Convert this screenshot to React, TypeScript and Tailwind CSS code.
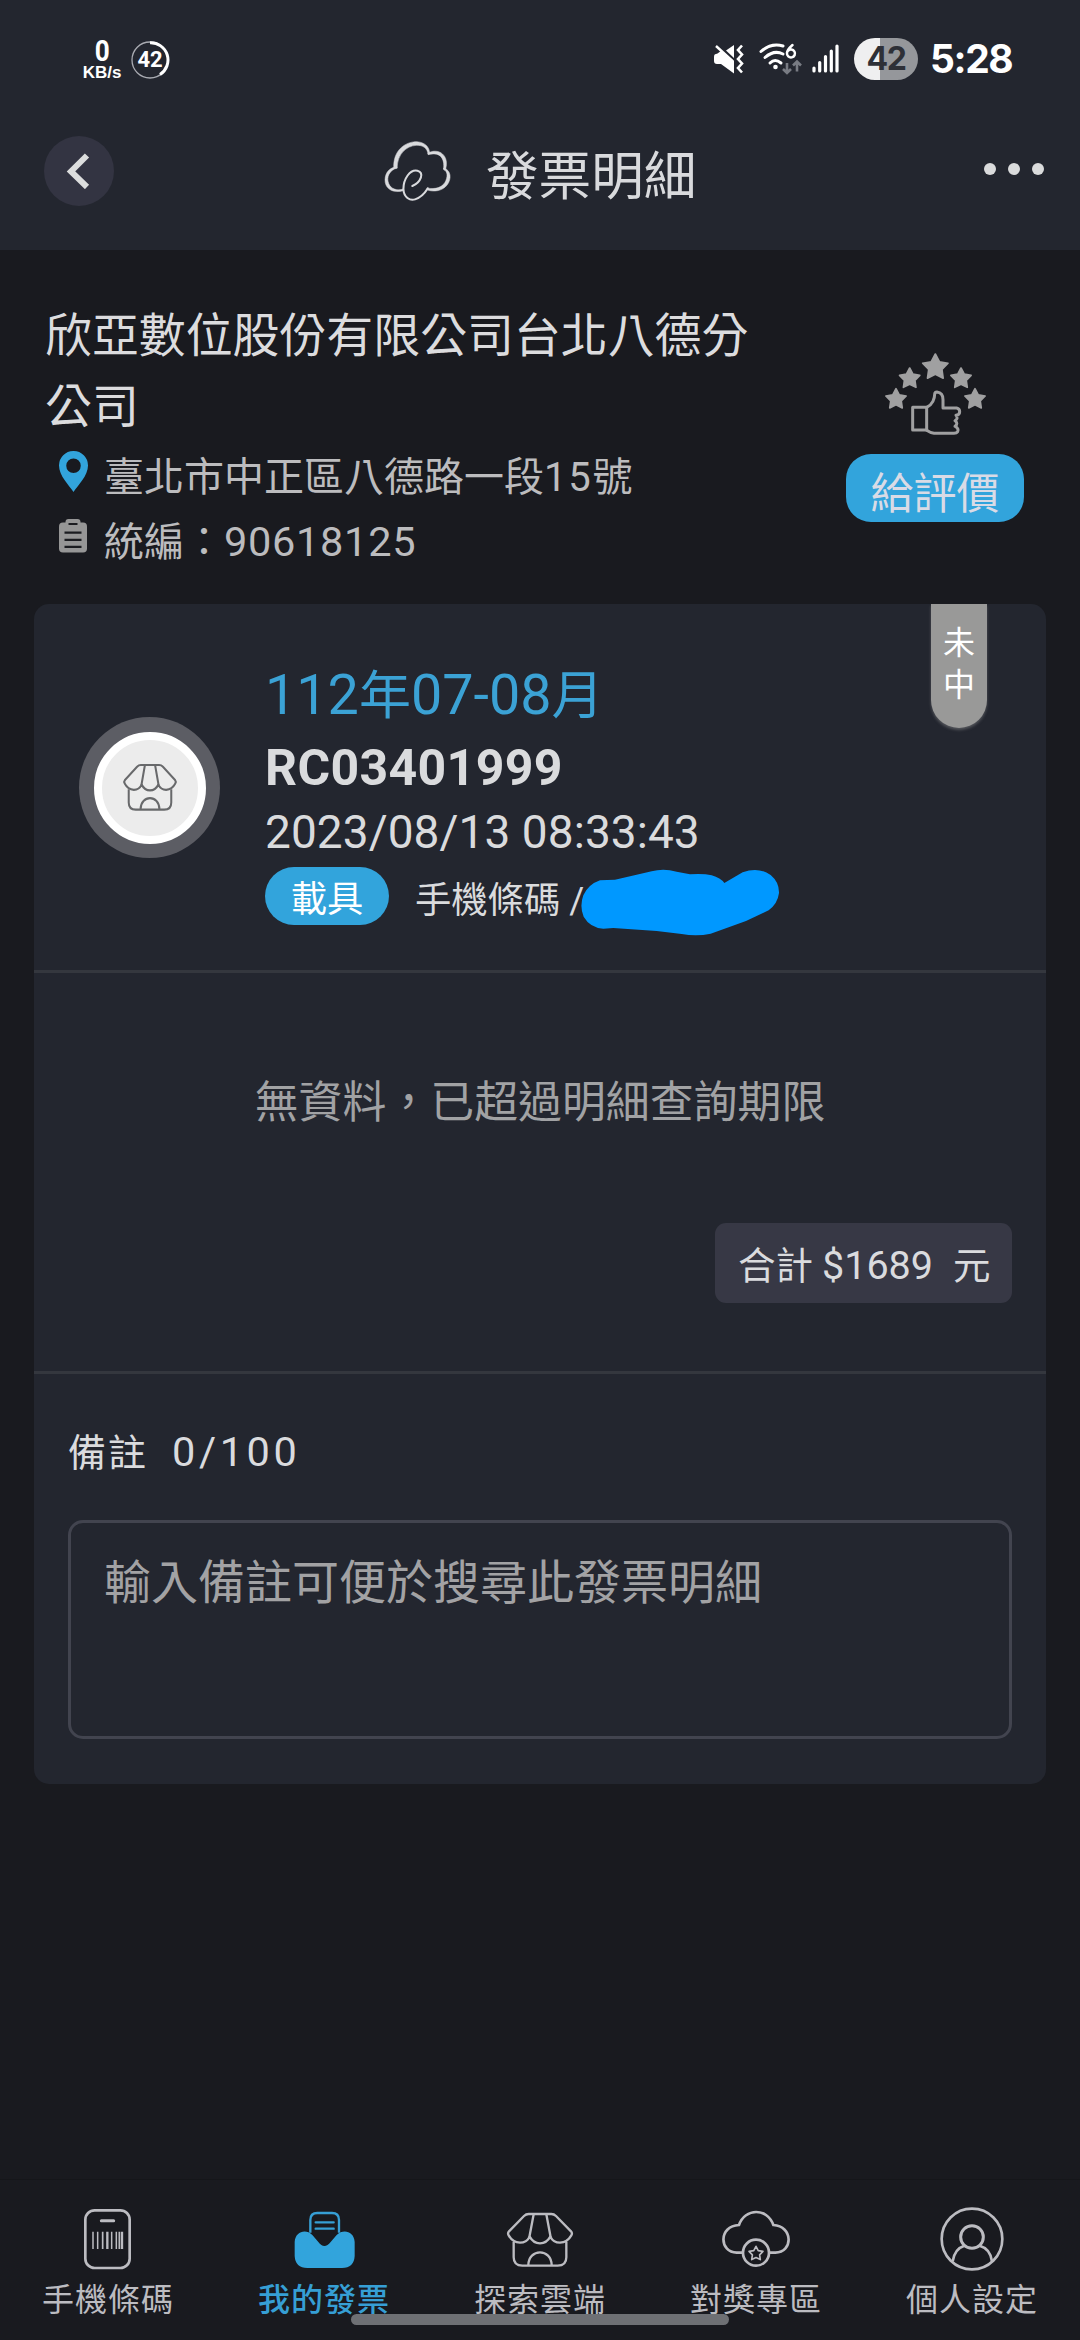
import type { ReactNode } from "react";

const STORE_PATHS = (
  <>
    <path d="M326 162 H394 Q402 162 408 168 L453 214 Q458 220 454 226 Q442 247 420 248 Q400 248 391 230 Q380 250 360 250 Q340 250 329 230 Q320 248 300 248 Q278 247 266 226 Q262 220 267 214 L312 168 Q318 162 326 162 Z" />
    <path d="M341 163 L328 232 M379 163 L392 232" />
    <path d="M281 246 V292 Q281 317 307 317 H413 Q439 317 439 292 V246" />
    <path d="M325 316 C325 264 395 264 395 316" />
  </>
);

function StarShape({ x, y, r }: { x: number; y: number; r: number }) {
  const points = Array.from({ length: 10 }, (_, i) => {
    const radius = i % 2 === 0 ? r : r * 0.52;
    const a = (Math.PI / 5) * i - Math.PI / 2;
    return `${(x + radius * Math.cos(a)).toFixed(1)},${(y + radius * Math.sin(a)).toFixed(1)}`;
  }).join(" ");
  return <polygon points={points} strokeLinejoin="round" />;
}

function StatusBar() {
  return (
    <div className="flex h-[118px] items-start justify-between pl-[82px] pr-[69px] text-white">
      <div className="flex pt-[38px]">
        <div className="flex w-10 flex-col items-center">
          <span className="h-[27px] scale-x-90 text-[29px] font-bold leading-[27px]">0</span>
          <span className="mt-[1px] h-[14px] font-['Liberation_Sans'] text-[17px] font-bold leading-[14px]">KB/s</span>
        </div>
        <div className="ml-[8px] mt-[1px] grid place-items-center">
          <svg className="col-start-1 row-start-1 h-10 w-10" viewBox="0 0 40 40" fill="none">
            <circle cx="20" cy="20" r="18" stroke="#a9abb2" strokeWidth="1.3" />
            <path d="M20 2.8 A17.2 17.2 0 0 1 30 34.5" stroke="#fff" strokeWidth="3" />
          </svg>
          <span className="col-start-1 row-start-1 text-[22px] font-bold leading-none">42</span>
        </div>
      </div>
      <div className="flex items-center pt-[38px]">
        <svg className="h-[42px] w-[30px]" viewBox="0 0 30 42">
          <path d="M2 16 Q0 16 0 19 V23 Q0 26 3 26 H7 L20 35.5 V23 L7.5 12.5 L3.5 15.5 Z M12 12.5 L20 7 V20 Z" fill="#fff" />
          <path d="M2 8 L19 23.5" stroke="#fff" strokeWidth="2.4" />
          <path d="M28 7.5 L24 12 L28 16.5 L24 21 L28 25.5 L24 30 L28 34.5" fill="none" stroke="#fff" strokeWidth="2.6" />
        </svg>
        <svg className="ml-[14px] h-[42px] w-[46px]" viewBox="0 0 46 42" fill="none">
          <g stroke="#fff" strokeWidth="3" strokeLinecap="round">
            <path d="M3 13.5 Q13 4.5 25 8" />
            <path d="M7 19.5 Q16 11.5 25 16" />
            <path d="M12 25 Q17 20 23 25" />
          </g>
          <circle cx="17.5" cy="29" r="2.3" fill="#fff" />
          <path d="M34.5 7 C30 11 29 14 29 15 A4 4 0 1 0 30 12.8" stroke="#fff" strokeWidth="2.5" strokeLinecap="round" />
          <path d="M29 25 V35 M25 31 L29 35 L33 31 M39 33.5 V23.5 M35 27.5 L39 23.5 L43 27.5" stroke="#787b83" strokeWidth="2.6" />
        </svg>
        <svg className="ml-[7px] h-[42px] w-[30px]" viewBox="0 0 30 42" stroke="#fff" strokeWidth="3.2" strokeLinecap="round">
          <path d="M3 30 V33 M8.7 24.5 V33 M14.5 18.5 V33 M20.3 13 V33 M26 8 V33" />
        </svg>
        <div className="ml-[13px] flex h-[42px] w-[64px] items-center justify-center rounded-full bg-[linear-gradient(90deg,#efeff0_41%,#95979b_41%)] font-['Inter'] text-[32px] font-bold tracking-[-1.5px] text-[#2e3037]">
          42
        </div>
        <span className="ml-[12px] w-[81px] whitespace-nowrap font-['Inter'] text-[39px] font-bold leading-[42px] tracking-[-1.4px]">
          5:28
        </span>
      </div>
    </div>
  );
}

function CloudLogo() {
  return (
    <svg className="h-[65px] w-[77px]" viewBox="1100 415 224 195" preserveAspectRatio="none" fill="#d9dadd" stroke="#d9dadd" strokeWidth="1.5">
      <path d="M1143 503 C1140 450 1175 423 1210 423 C1235 425 1247 440 1247 457 L1243 461 C1240 442 1228 433 1208 434 C1180 436 1153 460 1153 502 Z" />
      <path d="M1242 457 C1275 440 1305 465 1294 505 L1288 505 C1291 475 1280 452 1243 462 Z" />
      <path d="M1288 502 C1310 508 1312 535 1298 553 C1284 572 1258 574 1241 568 L1240 562 C1265 567 1283 560 1292 545 C1300 530 1301 512 1288 507 Z" />
      <path d="M1153 502 C1130 508 1121 530 1128 548 C1134 566 1155 571 1170 565 L1170 570 C1145 578 1122 568 1118 545 C1115 522 1127 503 1145 500 Z" />
      <path
        d="M1197 556 C1222 545 1233 515 1212 510 C1190 505 1171 535 1171 565 C1172 590 1190 601 1205 596 C1225 590 1235 575 1242 563"
        fill="none"
        strokeWidth="6"
        strokeLinecap="round"
      />
    </svg>
  );
}

function Header() {
  return (
    <header className="h-[250px] bg-[#23262f]">
      <StatusBar />
      <div className="flex h-[106px] items-center pl-[44px] pr-[36px]">
        <button className="grid h-[70px] w-[70px] place-items-center rounded-full bg-[#333442]">
          <svg className="mr-[3px] h-9 w-7" viewBox="0 0 28 36" fill="none" stroke="#dcdddd" strokeWidth="6">
            <path d="M23 2.5 L7 18.5 L23 34" />
          </svg>
        </button>
        <div className="ml-[265px] flex items-center">
          <CloudLogo />
          <h1 className="ml-[30px] mt-[12px] text-[52.6px] leading-[60px] text-[#d9dadd]">發票明細</h1>
        </div>
        <div className="mb-1 ml-auto flex gap-[12px]">
          <span className="h-3 w-3 rounded-full bg-[#dadbdc]" />
          <span className="h-3 w-3 rounded-full bg-[#dadbdc]" />
          <span className="h-3 w-3 rounded-full bg-[#dadbdc]" />
        </div>
      </div>
    </header>
  );
}

function RatingIcon() {
  return (
    <svg className="h-[86px] w-[106px]" viewBox="246 94 318 258" fill="none">
      <g fill="#a0a0a1" stroke="#a0a0a1" strokeWidth="5">
        <StarShape x={406} y={143} r={40} />
        <StarShape x={329} y={177} r={32} />
        <StarShape x={483} y={177} r={32} />
        <StarShape x={288} y={239} r={32} />
        <StarShape x={525} y={239} r={32} />
      </g>
      <g stroke="#a0a0a1" strokeWidth="9" strokeLinejoin="round" strokeLinecap="round">
        <path d="M338 263 H380 V331 H338 Z" />
        <path d="M380 263 C398 255 404 236 404 224 Q404 217 411 217 Q429 219 429 240 V265 H470 Q479 267 479 276 Q479 285 468 287 Q476 296 465 303 Q476 312 465 320 Q478 328 473 336 Q470 341 462 341 H402 Q392 340 380 332" />
      </g>
    </svg>
  );
}

function StoreInfo() {
  return (
    <section className="flex h-[354px] justify-between pl-[45px] pr-[56px] pt-[50px]">
      <div className="w-[708px]">
        <h2 className="w-[706px] text-[46.9px] leading-[71px] text-[#dcdcde]">欣亞數位股份有限公司台北八德分公司</h2>
        <div className="mt-[3px] flex h-[65px] pl-[14px] text-[#bcbcbe]">
          <svg className="mt-[6px] h-[42px] w-[29px]" viewBox="0 0 29 42">
            <path
              fillRule="evenodd"
              fill="#32a4dc"
              d="M14.5 0 A14.4 14.4 0 0 1 29 14.5 C29 25 19 34 14.5 41 C10 34 0 25 0 14.5 A14.4 14.4 0 0 1 14.5 0 Z M14.5 7.5 A7.2 7.2 0 1 0 14.5 22 A7.2 7.2 0 1 0 14.5 7.5 Z"
            />
          </svg>
          <p className="ml-[16px] text-[40px] leading-[65px]">
            臺北市中正區八德路一段<span className="tracking-[1.8px]">15</span>號
          </p>
        </div>
        <div className="flex h-[65px] pl-[14px] text-[#bcbcbe]">
          <svg className="mt-[9px] h-[34px] w-[28px]" viewBox="0 0 28 34">
            <rect x="0" y="3.5" width="28" height="30" rx="4" fill="#969696" />
            <rect x="6.5" y="0" width="15" height="9" rx="3" fill="#969696" />
            <path d="M9.5 5 H18.5 M5.5 13.7 H22.5 M5.5 20.8 H22.5 M5.5 27.8 H22.5" stroke="#1b1c20" strokeWidth="2.2" />
          </svg>
          <p className="ml-[17px] text-[40px] leading-[64px]">
            統編：<span className="text-[41.5px] tracking-[0.7px]">90618125</span>
          </p>
        </div>
      </div>
      <div className="flex w-[178px] flex-col items-center pt-[51px]">
        <RatingIcon />
        <button className="mt-[17px] h-[68px] w-[178px] rounded-[25px] bg-[#32a4dc] pt-[12px] text-[43px] leading-[56px] text-[#d9dbe6]">
          給評價
        </button>
      </div>
    </section>
  );
}

function StoreAvatar() {
  return (
    <div className="grid h-[141px] w-[141px] place-items-center rounded-full bg-[#5c5d64]">
      <div className="grid h-[112px] w-[112px] place-items-center rounded-full border-[8px] border-white bg-[#ececec]">
        <svg className="h-[49px] w-[56px]" viewBox="256 155 208 170" preserveAspectRatio="none" fill="none" stroke="#68696b" strokeWidth="7.5" strokeLinejoin="round">
          {STORE_PATHS}
        </svg>
      </div>
    </div>
  );
}

function InvoiceCard() {
  return (
    <section className="relative mx-[34px] h-[1180px] rounded-[15px] bg-[#23262f]">
      <div className="absolute right-[59px] top-0 flex h-[124px] w-[56px] flex-col items-center rounded-b-full bg-[#999998] pt-[18px] text-[32px] leading-[42px] text-white shadow-[0_2px_3px_rgba(160,160,160,0.4)]">
        <span>未</span>
        <span>中</span>
      </div>
      <div className="flex h-[369px] border-b-[3px] border-[#34373e] pl-[45px] pt-[54px]">
        <div className="mt-[59px]">
          <StoreAvatar />
        </div>
        <div className="ml-[45px] text-[#dadbdd]">
          <p className="h-[74px] whitespace-nowrap text-[55.7px] leading-[74px] text-[#3ba2d5]">
            112<span className="text-[52px]">年</span>07-08<span className="text-[52px]">月</span>
          </p>
          <p className="text-[50px] font-bold leading-[72px] tracking-[0.35px]">RC03401999</p>
          <p className="text-[46px] leading-[56px] tracking-[0.06px]">2023/08/13 08:33:43</p>
          <div className="mt-[7px] flex h-[58px] text-[36.3px]">
            <span className="h-[58px] w-[124px] rounded-full bg-[#32a4dc] pt-[8px] text-center leading-[50px] text-white">載具</span>
            <span className="ml-[26px] whitespace-nowrap pt-[9px] leading-[50px]">手機條碼 /</span>
            <svg className="relative -ml-[6px] h-[72px] w-[206px] shrink-0" viewBox="234 680 618 216">
              <path
                fill="#0098ff"
                d="M300 720 L345 718 L455 693 Q490 683 530 694 L570 702 Q610 699 635 705 Q662 713 673 728 L728 696 Q775 678 812 704 Q838 726 837 758 Q833 790 806 810 L738 842 L632 880 Q590 889 545 881 L470 872 L340 863 L310 865 Q270 862 251 829 Q238 798 250 765 Q265 732 300 720 Z"
              />
            </svg>
          </div>
        </div>
      </div>
      <div className="flex h-[401px] flex-col border-b-[3px] border-[#34373e] px-[34px] pt-[100px]">
        <p className="text-center text-[43.9px] leading-[60px] text-[#a1a2a4]">無資料，已超過明細查詢期限</p>
        <div className="ml-auto mt-[90px] flex h-[80px] w-[297px] items-center rounded-[11px] bg-[#373845] pl-[23px] pt-[6px] text-[37.5px] leading-[60px] text-[#dadbde]">
          <span>合計</span>
          <span className="ml-[9px] text-[39.5px]">$1689</span>
          <span className="ml-[20px]">元</span>
        </div>
      </div>
      <div className="px-[34px] pt-[48px]">
        <p className="flex h-[60px] items-baseline text-[38px] leading-[60px] text-[#dadbde]">
          <span className="tracking-[2px]">備註</span>
          <span className="ml-[24px] text-[41.5px] tracking-[3.6px]">0/100</span>
        </p>
        <div className="mt-[38px] h-[219px] rounded-[15px] border-[3px] border-[#42444f] pl-[33px] pt-[25px] text-[47px] leading-[70px] text-[#a2a2a4]">
          輸入備註可便於搜尋此發票明細
        </div>
      </div>
    </section>
  );
}

function NavItem({ label, viewBox, active, children }: { label: string; viewBox: string; active?: boolean; children: ReactNode }) {
  return (
    <button className={`flex flex-1 flex-col items-center pt-[26px] ${active ? "font-medium text-[#369fd5]" : "text-[#bcbcc1]"}`}>
      <svg className="h-[66px] w-[72px]" viewBox={viewBox} fill="none" stroke="currentColor" strokeWidth="7" strokeLinejoin="round">
        {children}
      </svg>
      <span className="mt-[3px] text-[32px] leading-[50px] tracking-[1px]">{label}</span>
    </button>
  );
}

function BottomNav() {
  return (
    <nav className="relative flex h-[160px] bg-[#191a1f]">
      <NavItem label="手機條碼" viewBox="216 138 216 198">
        <rect x="256" y="151" width="133" height="173" rx="28" strokeWidth="8" />
        <path d="M304 182 H341" strokeWidth="9" strokeLinecap="round" />
        <path d="M279 215 V267 M293 215 V267 M335 215 V267 M349 215 V267" strokeWidth="4.5" />
        <path d="M308 215 V267 M358 215 V267" strokeWidth="5" />
        <path d="M322 215 V267 M366 215 V267" strokeWidth="7" />
      </NavItem>
      <NavItem label="我的發票" viewBox="864 138 216 198" active>
        <path d="M931 218 V180 Q931 159 952 159 H996 Q1017 159 1017 180 V218" />
        <path d="M947 187 H1001 M947 206 H1001" strokeLinecap="round" />
        <path
          d="M884 246 C886 214 918 206 937 225 L955 246 Q973 270 992 246 L1010 225 C1030 206 1062 214 1064 246 V288 Q1062 324 1026 324 H922 Q886 324 884 288 Z"
          fill="#32a4dc"
          stroke="none"
        />
      </NavItem>
      <NavItem label="探索雲端" viewBox="252 138 216 198">
        {STORE_PATHS}
      </NavItem>
      <NavItem label="對獎專區" viewBox="900 138 216 198">
        <path d="M968 278 H950 C898 278 894 198 957 195 C975 143 1042 143 1060 195 C1120 198 1120 278 1066 278 H1048" strokeWidth="8" />
        <circle cx="1008" cy="278" r="39" strokeWidth="8" />
        <g strokeWidth="5">
          <StarShape x={1008} y={281} r={22} />
        </g>
      </NavItem>
      <NavItem label="個人設定" viewBox="768 138 216 198">
        <circle cx="876" cy="237" r="91" strokeWidth="8" />
        <circle cx="876" cy="231" r="34" strokeWidth="9" />
        <path d="M818 304 C822 277 834 263 853 257 M899 257 C920 263 933 280 936 304" strokeWidth="8" />
      </NavItem>
      <div className="absolute bottom-[15px] left-[351px] h-[11px] w-[378px] rounded-full bg-[#6e7074]" />
    </nav>
  );
}

export default function App() {
  return (
    <div className="flex h-[2340px] w-[1080px] flex-col overflow-hidden bg-[#191a1f] font-['Roboto','Noto_Sans_CJK_TC',sans-serif]">
      <Header />
      <main className="flex-1 shadow-[inset_0_-1px_0_#15161a]">
        <StoreInfo />
        <InvoiceCard />
      </main>
      <BottomNav />
    </div>
  );
}
